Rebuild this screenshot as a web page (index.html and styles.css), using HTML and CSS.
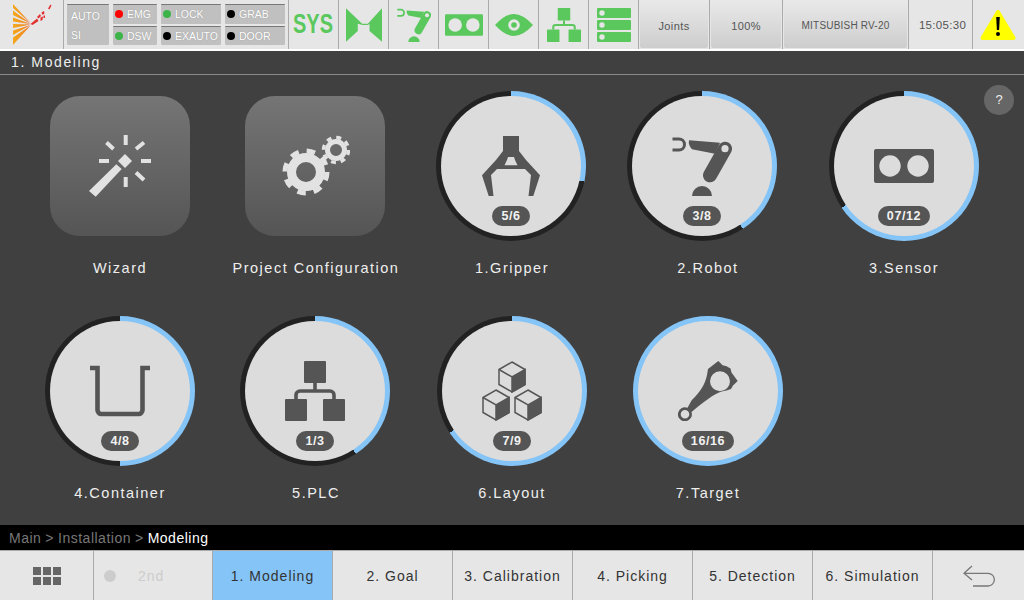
FILE: index.html
```html
<!DOCTYPE html>
<html lang="en">
<head>
  <meta charset="UTF-8">
  <title>Modeling</title>
  <link rel="stylesheet" href="styles.css">
</head>
<body>
  <!-- shared icons -->
  <svg class="defs" width="0" height="0">
    <defs>
      <linearGradient id="fan" x1="0" x2="1" y1="0" y2="0">
        <stop offset="0" stop-color="#f5a81c"/>
        <stop offset="0.7" stop-color="#f08a20"/>
        <stop offset="1" stop-color="#e8502a"/>
      </linearGradient>
      <symbol id="i-robot" viewBox="0 0 60 60">
        <path d="M0.5 3 H7 A5.5 5.5 0 0 1 7 14 H0.5" fill="none" stroke="currentColor" stroke-width="3"/>
        <path d="M17 4.3 L48 6.7 L43 17.7 L20 13.3 Q16 9 17 4.3Z"/>
        <path d="M53 12.7 L38 39.3" fill="none" stroke="currentColor" stroke-width="14" stroke-linecap="round"/>
        <circle class="hole" cx="53" cy="12.7" r="3.6"/>
        <path d="M20 60 a10 10 0 0 1 20 0z"/>
      </symbol>
      <symbol id="i-sensor" viewBox="0 0 60 60">
        <rect x="0" y="13" width="60" height="34" rx="2"/>
        <circle class="hole" cx="16" cy="30" r="10.7"/>
        <circle class="hole" cx="44" cy="30" r="10.7"/>
      </symbol>
      <symbol id="i-plc" viewBox="0 0 60 60">
        <rect x="19" y="0" width="22" height="22" rx="1"/>
        <rect x="0" y="38" width="22" height="22" rx="1"/>
        <rect x="38" y="38" width="22" height="22" rx="1"/>
        <path d="M30 22V30M11 38V34a4 4 0 0 1 4-4H45a4 4 0 0 1 4 4V38" fill="none" stroke="currentColor" stroke-width="3.6"/>
      </symbol>
      <symbol id="i-cube" viewBox="0 0 28 32">
        <path d="M14 1 L27 8.5 V23.5 L14 31 L1 23.5 V8.5Z" fill="none" stroke="currentColor" stroke-width="1.5"/>
        <path d="M1 8.5 L14 16 L27 8.5 V23.5 L14 31 V16" fill="none" stroke="currentColor" stroke-width="1.5"/>
        <path d="M14 16 L27 8.5 V23.5 L14 31Z"/>
      </symbol>
    </defs>
  </svg>

  <header class="topbar">
    <div class="cell logo">
      <svg width="40" height="44" viewBox="0 0 40 44">
        <g fill="url(#fan)">
          <path d="M1 1 L18.5 20 L1 5Z"/>
          <path d="M1 7.5 L18.5 20.5 L1 12Z"/>
          <path d="M1 14.5 L18.5 21 L1 18.5Z"/>
          <path d="M1 21 L18.5 21.5 L1 25Z"/>
          <path d="M1 27.5 L18.5 22 L1 32Z"/>
          <path d="M1 34.5 L18.5 22.5 L1 42Z"/>
        </g>
        <g fill="#e23030">
          <path d="M18.5 21 L25 15.5 L26.5 18 L20.5 22Z"/>
          <path d="M25 14 L28 11 L29 13 L26.5 15.5Z"/>
          <path d="M28.5 14.5 L31 13.5 L30.5 17 L28.5 18Z"/>
          <path d="M29.5 9.5 L32 8 L32.5 10.5 L30.5 12Z"/>
          <path d="M31.5 12.5 L33 12.5 L33 15 L31.5 15Z"/>
          <path d="M36 5.5 L38.5 1.5 L39.5 2.5 L37.5 6.5Z"/>
        </g>
      </svg>
    </div>
    <div class="cell status">
      <div class="status-col status-col-mode">
        <div class="mode-panel"><span>AUTO</span><span>SI</span></div>
      </div>
      <div class="status-col status-col-a">
        <div class="pill"><i class="led led-red"></i>EMG</div>
        <div class="pill"><i class="led led-green"></i>DSW</div>
      </div>
      <div class="status-col status-col-b">
        <div class="pill"><i class="led led-green"></i>LOCK</div>
        <div class="pill"><i class="led led-black"></i>EXAUTO</div>
      </div>
      <div class="status-col status-col-c">
        <div class="pill"><i class="led led-black"></i>GRAB</div>
        <div class="pill"><i class="led led-black"></i>DOOR</div>
      </div>
    </div>
    <div class="cell tool sys"><span class="sys-text">SYS</span></div>
    <div class="cell tool">
      <svg width="36" height="34" viewBox="0 0 107 100"><path d="M0 0L48 46H65L107 0V100L70 68V48L63 50H50L35 46V68L0 100Z"/></svg>
    </div>
    <div class="cell tool"><svg width="34" height="34"><use href="#i-robot"/></svg></div>
    <div class="cell tool"><svg width="38" height="38"><use href="#i-sensor"/></svg></div>
    <div class="cell tool">
      <svg width="38" height="22" viewBox="0 0 38 22">
        <path d="M0 11 Q10 0 19 0 Q28 0 38 11 Q28 22 19 22 Q10 22 0 11Z"/>
        <circle class="hole" cx="19" cy="11" r="5.8"/>
        <circle cx="19" cy="11" r="2.8"/>
      </svg>
    </div>
    <div class="cell tool"><svg width="34" height="34"><use href="#i-plc"/></svg></div>
    <div class="cell tool">
      <svg width="34" height="34" viewBox="0 0 34 34">
        <rect y="0" width="34" height="10" rx="1"/>
        <rect y="12" width="34" height="10" rx="1"/>
        <rect y="24" width="34" height="10" rx="1"/>
        <circle class="hole" cx="5" cy="5" r="2.7"/>
        <circle class="hole" cx="5" cy="17" r="2.7"/>
        <circle class="hole" cx="5" cy="29" r="2.7"/>
      </svg>
    </div>
    <div class="cell btn-cell btn-joints"><div class="btn">Joints</div></div>
    <div class="cell btn-cell btn-speed"><div class="btn">100%</div></div>
    <div class="cell btn-cell btn-robot"><div class="btn">MITSUBISH RV-20</div></div>
    <div class="cell clock">15:05:30</div>
    <div class="cell warn">
      <svg width="36" height="32" viewBox="0 0 36 32">
        <path d="M18 3 L33.5 29 H2.5Z" fill="#ffff00" stroke="#ffff00" stroke-width="4" stroke-linejoin="round"/>
        <path d="M16.2 8 H19.8 L19.1 21 H16.9Z" fill="#000"/>
        <circle cx="18" cy="25" r="2" fill="#000"/>
      </svg>
    </div>
  </header>

  <div class="title-bar">1. Modeling</div>

  <main class="content">
    <div class="help">?</div>
    <div class="tile-grid">
      <div class="tile">
        <div class="square">
          <svg width="62" height="62" viewBox="0 0 62 62">
            <path d="M34.7 0h4v10h-4zM10 24h10v4h-10zM52 24h10v4h-10zM34.7 42h4v10h-4z"/>
            <path d="M17.5 7.5L24.5 14M55 7.5L47 14M47 37.5L55 45" fill="none" stroke="currentColor" stroke-width="4"/>
            <path d="M36 19L43 26L36 33L29 26Z"/>
            <path d="M0 56L27.3 29.3L32.7 34L6.7 61.7Z"/>
          </svg>
        </div>
        <div class="tile-label">Wizard</div>
      </div>
      <div class="tile">
        <div class="square shift-1">
          <svg width="70" height="62" viewBox="0 0 70 62">
            <circle cx="26" cy="37" r="14.5" fill="none" stroke="currentColor" stroke-width="9"/>
            <circle cx="26" cy="37" r="21" fill="none" stroke="currentColor" stroke-width="5" stroke-dasharray="8.5 8"/>
            <circle cx="56" cy="15" r="8.5" fill="none" stroke="currentColor" stroke-width="5"/>
            <circle cx="56" cy="15" r="12.5" fill="none" stroke="currentColor" stroke-width="3.5" stroke-dasharray="4.9 4.9"/>
          </svg>
        </div>
        <div class="tile-label">Project Configuration</div>
      </div>
      <div class="tile">
        <div class="ring shift-1" style="--fill: 102deg">
          <div class="face">
            <svg width="60" height="60" viewBox="0 0 60 60">
              <rect x="22" y="0" width="16" height="16"/>
              <path d="M15 24L22 15H38L45 24L59 39.3L52.3 60H47.5L50 39L44 33H16L10 39L12.5 60H7.7L1 39.3Z"/>
              <path class="hole" d="M23.5 29.3H36.5L34 24L33 21H27L26 24Z"/>
            </svg>
            <span class="badge">5/6</span>
          </div>
        </div>
        <div class="tile-label">1.Gripper</div>
      </div>
      <div class="tile">
        <div class="ring shift-6" style="--fill: 147deg">
          <div class="face">
            <svg width="60" height="60"><use href="#i-robot"/></svg>
            <span class="badge">3/8</span>
          </div>
        </div>
        <div class="tile-label">2.Robot</div>
      </div>
      <div class="tile">
        <div class="ring" style="--fill: 236deg">
          <div class="face">
            <svg width="60" height="60"><use href="#i-sensor"/></svg>
            <span class="badge">07/12</span>
          </div>
        </div>
        <div class="tile-label">3.Sensor</div>
      </div>
      <div class="tile">
        <div class="ring" style="--fill: 180deg">
          <div class="face">
            <svg width="60" height="60" viewBox="0 0 60 60">
              <path d="M0 7H7.5V49a4 4 0 0 0 4 4H48.5a4 4 0 0 0 4-4V7H60" fill="none" stroke="currentColor" stroke-width="4.6"/>
            </svg>
            <span class="badge">4/8</span>
          </div>
        </div>
        <div class="tile-label">4.Container</div>
      </div>
      <div class="tile">
        <div class="ring shift-1" style="--fill: 147deg">
          <div class="face">
            <svg width="60" height="60"><use href="#i-plc"/></svg>
            <span class="badge">1/3</span>
          </div>
        </div>
        <div class="tile-label">5.PLC</div>
      </div>
      <div class="tile">
        <div class="ring" style="--fill: 236deg">
          <div class="face">
            <svg width="60" height="60" viewBox="0 0 60 60">
              <use href="#i-cube" x="16" y="0" width="28" height="32"/>
              <use href="#i-cube" x="0" y="28" width="28" height="32"/>
              <use href="#i-cube" x="32" y="28" width="28" height="32"/>
            </svg>
            <span class="badge">7/9</span>
          </div>
        </div>
        <div class="tile-label">6.Layout</div>
      </div>
      <div class="tile">
        <div class="ring" style="--fill: 360deg">
          <div class="face">
            <svg width="60" height="60" viewBox="0 0 60 60">
              <path fill-rule="evenodd" d="M40.3 0L44.6 4.3L48.5 5.3L52.5 7.6L53.5 11.6L59.7 20L55 24.5L53 28L48.5 29.5C38 31 30 38 19.5 46L13.5 51A7 7 0 1 1 9.5 46.8L13.7 39.3C22 31 27 24 29 14L30 8ZM52 20.3A10 10 0 1 0 32 20.3A10 10 0 1 0 52 20.3ZM11.3 53.3A4.3 4.3 0 1 0 2.7 53.3A4.3 4.3 0 1 0 11.3 53.3Z"/>
            </svg>
            <span class="badge">16/16</span>
          </div>
        </div>
        <div class="tile-label">7.Target</div>
      </div>
    </div>
  </main>

  <div class="crumbs">
    <span>Main</span><span class="crumb-sep">&gt;</span><span>Installation</span><span class="crumb-sep">&gt;</span><span class="crumb-now">Modeling</span>
  </div>

  <nav class="bottombar">
    <div class="tab tab-icon">
      <div class="apps"><i></i><i></i><i></i><i></i><i></i><i></i></div>
    </div>
    <div class="tab tab-second"><i class="second-dot"></i><span>2nd</span></div>
    <div class="tab tab-on">1. Modeling</div>
    <div class="tab">2. Goal</div>
    <div class="tab">3. Calibration</div>
    <div class="tab">4. Picking</div>
    <div class="tab">5. Detection</div>
    <div class="tab">6. Simulation</div>
    <div class="tab tab-icon tab-back">
      <svg width="32" height="22" viewBox="0 0 32 22">
        <path d="M9 1L1 8.3L9 15M1 8.3H25a6.3 6.3 0 0 1 0 12.7H10" fill="none" stroke="#777" stroke-width="1.3"/>
      </svg>
    </div>
  </nav>
</body>
</html>
```

FILE: styles.css
```css
body {
  margin: 0;
  width: 1024px;
  height: 600px;
  overflow: hidden;
  display: flex;
  flex-direction: column;
  background-color: #404040;
  font-family: "Liberation Sans", Arial, sans-serif;
}

.defs {
  position: absolute;
}

/* top bar */
.topbar {
  display: flex;
  flex: none;
  height: 49px;
  border-bottom: 2px solid #fff;
  background-color: #e6e6e6;
  --hole: #e6e6e6;
}
.cell {
  flex: none;
  box-sizing: border-box;
  display: flex;
  align-items: center;
  justify-content: center;
  border-right: 1px solid #aaa;
}
.logo {
  width: 64px;
}
.status {
  width: 225px;
  padding: 4px 3px;
  gap: 4px;
  justify-content: flex-start;
  align-items: stretch;
}
.status-col {
  display: flex;
  flex-direction: column;
  gap: 2px;
}
.status-col-mode { width: 42px; }
.status-col-a { width: 44px; }
.status-col-b { width: 60px; }
.status-col-c { width: 60px; }
.mode-panel, .pill {
  box-sizing: border-box;
  background-color: #c0c0c0;
  border-top: 1px solid #777;
  border-radius: 1px;
  color: #fff;
  font-size: 10.5px;
  text-shadow: 0 0 1px #8a8a8a;
}
.mode-panel {
  flex: 1;
  display: flex;
  flex-direction: column;
  justify-content: space-between;
  padding: 4px 4px 3px;
  line-height: 14px;
}
.pill {
  flex: 1;
  display: flex;
  align-items: center;
  gap: 4px;
  padding-left: 2px;
}
.led {
  width: 8px;
  height: 8px;
  border-radius: 50%;
}
.led-red { background-color: #ff0000; }
.led-green { background-color: #3cb44a; }
.led-black { background-color: #000; }
.tool {
  width: 50px;
  color: #5bc85e;
  fill: #5bc85e;
}
.sys {
  font-size: 27px;
  font-weight: bold;
}
.sys-text {
  display: block;
  transform: scaleX(0.74);
}
.hole {
  fill: var(--hole);
}
.btn-cell {
  align-items: flex-start;
  padding: 0 1px 0 1px;
}
.btn-joints { width: 71px; }
.btn-speed { width: 73px; }
.btn-robot { width: 126px; }
.btn {
  box-sizing: border-box;
  width: 100%;
  height: 48px;
  padding-top: 3px;
  display: flex;
  align-items: center;
  justify-content: center;
  background: linear-gradient(#e9e9e9, #cdcdcd);
  border-radius: 0 0 2px 2px;
  color: #555;
  font-size: 11px;
  letter-spacing: 0.4px;
}
.btn-robot .btn {
  font-size: 10px;
  letter-spacing: 0.2px;
}
.clock {
  width: 64px;
  padding-left: 4px;
  color: #555;
  font-size: 11.5px;
  letter-spacing: 0.3px;
}
.warn {
  width: 50px;
  border-right: 0;
}

.title-bar {
  flex: none;
  box-sizing: border-box;
  height: 24px;
  padding-left: 11px;
  line-height: 22px;
  border-bottom: 1px solid #8a8a8a;
  color: #eee;
  font-size: 14px;
  letter-spacing: 1.6px;
}

/* main content */
.content {
  position: relative;
  flex: 1;
  min-height: 0;
  --hole: #dcdcdc;
}
.help {
  position: absolute;
  top: 10px;
  right: 10px;
  width: 30px;
  height: 30px;
  border-radius: 50%;
  background-color: #666;
  color: #eee;
  font-size: 13px;
  line-height: 30px;
  text-align: center;
}
.tile-grid {
  display: grid;
  grid-template-columns: repeat(5, 196px);
  grid-auto-rows: 225px;
  padding: 16px 0 0 22px;
}
.tile {
  display: flex;
  flex-direction: column;
  align-items: center;
}
.tile-label {
  margin-top: 18px;
  color: #eee;
  font-size: 14.5px;
  line-height: 18px;
  letter-spacing: 1.5px;
  white-space: nowrap;
}
.square {
  width: 140px;
  height: 140px;
  margin: 5px 0;
  border-radius: 30px;
  background: linear-gradient(#757575, #555);
  color: #e2e2e2;
  fill: #e2e2e2;
  display: flex;
  align-items: center;
  justify-content: center;
}
.ring {
  box-sizing: border-box;
  width: 150px;
  height: 150px;
  padding: 5px;
  border-radius: 50%;
  background: conic-gradient(#85c4f7 var(--fill), #222 0);
}
.shift-1 { margin-right: 2px; }
.shift-6 { margin-right: 12px; }
.face {
  box-sizing: border-box;
  height: 140px;
  padding-top: 40px;
  border-radius: 50%;
  background-color: #dcdcdc;
  color: #555;
  fill: #555;
  display: flex;
  flex-direction: column;
  align-items: center;
  gap: 10px;
}
.face svg {
  display: block;
}
.badge {
  height: 20px;
  padding: 0 9px;
  border-radius: 10px;
  background-color: #555;
  color: #f2f2f2;
  font-size: 12.5px;
  font-weight: bold;
  line-height: 20px;
  letter-spacing: 0.6px;
}

/* breadcrumb */
.crumbs {
  flex: none;
  height: 25px;
  display: flex;
  align-items: center;
  gap: 4px;
  padding-left: 9px;
  background-color: #000;
  color: #777;
  font-size: 14px;
  letter-spacing: 0.5px;
}
.crumb-now {
  color: #fff;
}

/* bottom tabs */
.bottombar {
  flex: none;
  height: 50px;
  display: flex;
  border-top: 1px solid #aaa;
  box-sizing: border-box;
  background-color: #e6e6e6;
}
.tab {
  flex: none;
  box-sizing: border-box;
  width: 120px;
  display: flex;
  align-items: center;
  justify-content: center;
  border-right: 1px solid #aaa;
  color: #333;
  font-size: 14px;
  letter-spacing: 1px;
}
.tab-icon {
  width: 94px;
}
.tab-second {
  width: 119px;
  justify-content: flex-start;
  padding-left: 10px;
  gap: 22px;
  color: #ccc;
}
.second-dot {
  width: 12px;
  height: 12px;
  border-radius: 50%;
  background-color: #ccc;
}
.tab-on {
  background-color: #85c4f7;
}
.tab-back {
  width: 92px;
  border-right: 0;
}
.apps {
  display: grid;
  grid-template-columns: repeat(3, 8px);
  gap: 2px;
}
.apps i {
  height: 8px;
  background-color: #666;
}
```
